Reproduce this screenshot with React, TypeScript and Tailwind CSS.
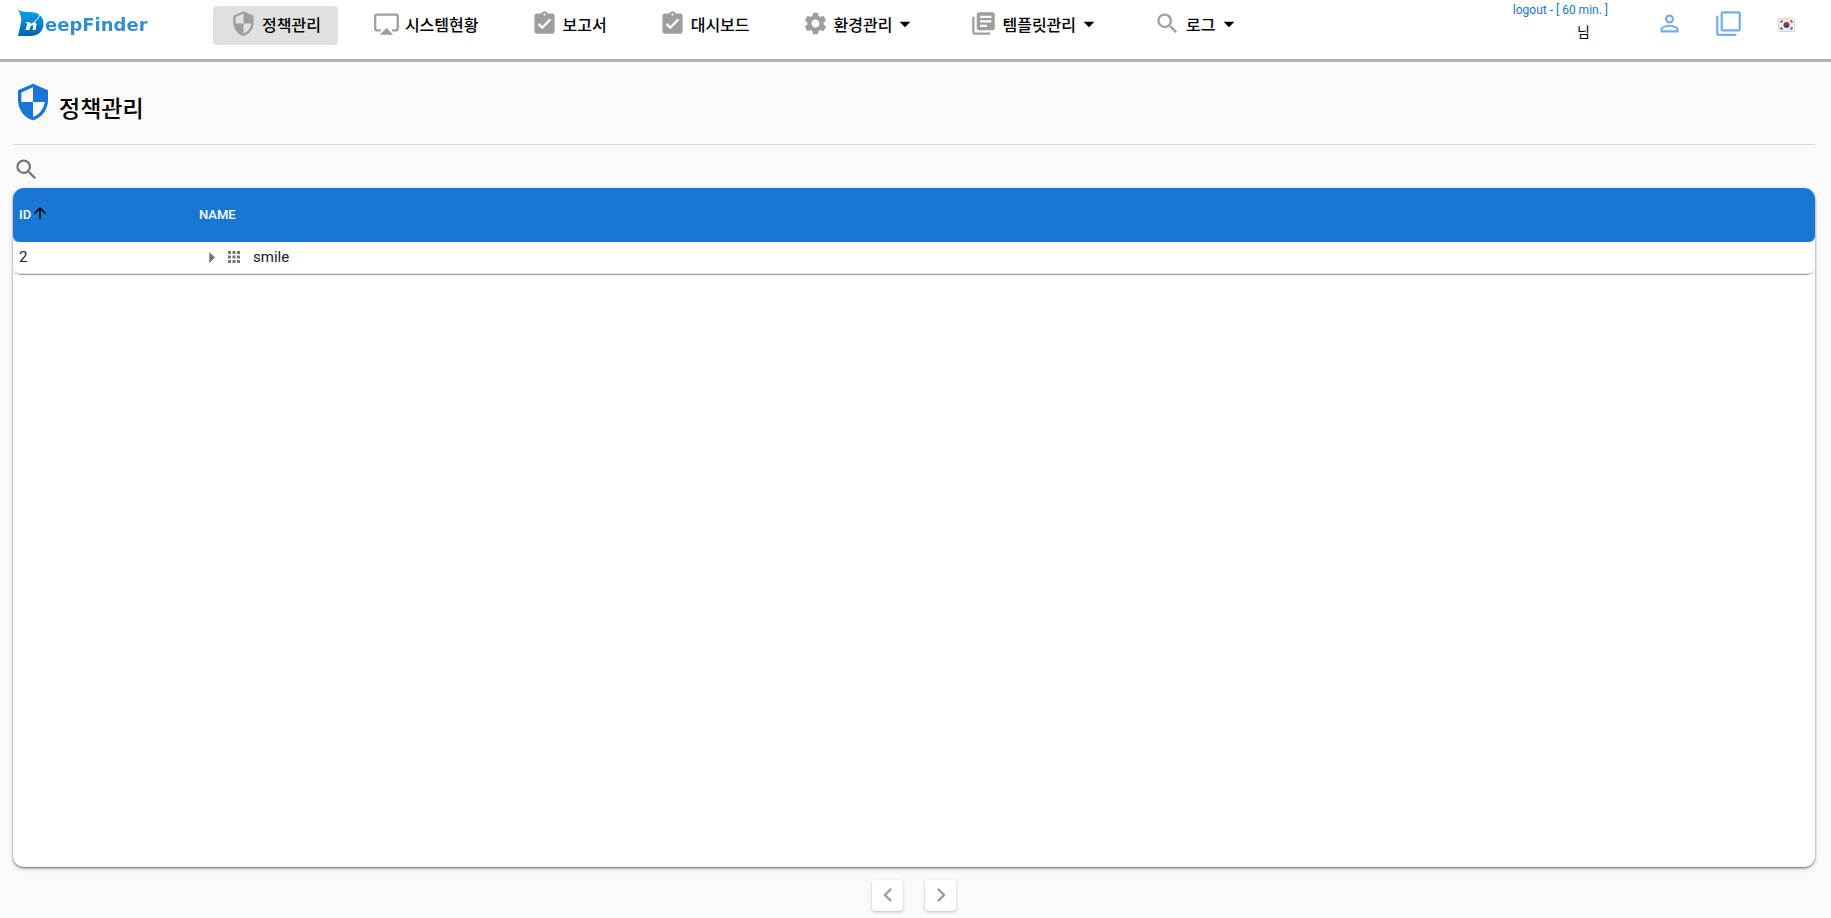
import { useState } from 'react';
import type { IconType } from 'react-icons';
import {
  MdAirplay,
  MdApps,
  MdArrowDropDown,
  MdArrowRight,
  MdArrowUpward,
  MdAssignmentTurnedIn,
  MdChevronLeft,
  MdChevronRight,
  MdFilterNone,
  MdLibraryBooks,
  MdPersonOutline,
  MdSearch,
  MdSecurity,
  MdSettings,
} from 'react-icons/md';

interface NavItem {
  label: string;
  icon: IconType;
  menu?: boolean;
}

interface Policy {
  id: number;
  name: string;
}

const navItems: NavItem[] = [
  { label: '정책관리', icon: MdSecurity },
  { label: '시스템현황', icon: MdAirplay },
  { label: '보고서', icon: MdAssignmentTurnedIn },
  { label: '대시보드', icon: MdAssignmentTurnedIn },
  { label: '환경관리', icon: MdSettings, menu: true },
  { label: '템플릿관리', icon: MdLibraryBooks, menu: true },
  { label: '로그', icon: MdSearch, menu: true },
];

const policies: Policy[] = [{ id: 2, name: 'smile' }];

function Logo() {
  return (
    <a href="#" aria-label="DeepFinder" className="flex w-[195px] shrink-0 items-center pl-[18px]">
      <svg width="27" height="26" viewBox="0 0 27 26" aria-hidden="true">
        <defs>
          <linearGradient id="logo-d" x1="0" y1="0" x2="0" y2="1">
            <stop offset="0" stopColor="#00a6ec" />
            <stop offset="1" stopColor="#0062b0" />
          </linearGradient>
        </defs>
        <path
          d="M0 0c5 2 9 2 14 2.200C20 2.500 25.500 6 25.500 13.500 25.500 21.500 20 26 12 26H0L3.500 10.500C3 6.500 2 3 0 0z"
          fill="url(#logo-d)"
        />
        <path
          d="M7.500 20l1.800-6.500L7 12c2.500 0 5 0 6 1l-.3 1.500C14.500 11.500 18.500 11.500 18.500 14.500L17.500 20h-3l.8-4.500c-1.500-.5-2.500.5-3 1.500l-1 3z"
          fill="#fff"
        />
        <path d="M16 11.500c3-.8 5-3.500 5.500-7" stroke="#fff" strokeWidth="1" fill="none" />
      </svg>
      <span className="bg-linear-to-b from-[#1c9ad8] to-[#3a86c8] bg-clip-text pt-1 font-['DejaVu_Sans'] text-[18px] leading-6 font-bold text-transparent">
        eepFinder
      </span>
    </a>
  );
}

function KoreanFlag() {
  return (
    <svg width="17" height="14" viewBox="0 0 17 14" aria-hidden="true">
      <rect x="0.500" y="0.500" width="16" height="13" rx="1" fill="#eeeeee" stroke="#d6d6d6" />
      <path d="M5.500 7a3 3 0 0 1 6 0z" fill="#d8232f" />
      <path d="M5.500 7a3 3 0 0 0 6 0z" fill="#1d4fa3" />
      <path
        d="M2.500 4.500l2-2M12.500 2.500l2 2M2.500 9.500l2 2M12.500 11.500l2-2"
        stroke="#555"
        strokeWidth="1.600"
      />
    </svg>
  );
}

function Header() {
  const [active, setActive] = useState('정책관리');

  return (
    <header className="flex h-[62px] items-start border-b-[3px] border-[#b3b3b3] bg-white">
      <div className="flex h-[46px] items-center">
        <Logo />
      </div>
      <nav className="flex gap-[18px] pt-[6px] pl-[18px]">
        {navItems.map(({ label, icon: Icon, menu }) => (
          <button
            key={label}
            type="button"
            onClick={() => setActive(label)}
            className={`flex h-[39px] items-center rounded-sm px-[17px] text-[16px] leading-6 font-medium whitespace-nowrap ${
              label === active ? 'bg-[#e0e0e0]' : ''
            }`}
          >
            <Icon className="mr-[5px] mb-1 size-[27px] text-[#9e9e9e]" />
            {label}
            {menu && <MdArrowDropDown className="mb-1 size-[26px]" />}
          </button>
        ))}
      </nav>
      <div className="ml-auto flex h-[46px] items-center pr-9">
        <div className="mr-12 flex h-[46px] flex-col items-end text-[12px] leading-5">
          <button type="button" className="text-[#1976d2]">
            logout - [ 60 min. ]
          </button>
          <span className="pt-[2px] pr-[18px] text-[14px]">님</span>
        </div>
        <button type="button" aria-label="사용자" className="mr-8 text-[#75ade4]">
          <MdPersonOutline className="size-[27px]" />
        </button>
        <button type="button" aria-label="새 창" className="mr-9 text-[#75ade4]">
          <MdFilterNone className="size-[27px]" />
        </button>
        <button type="button" aria-label="한국어" className="pt-1">
          <KoreanFlag />
        </button>
      </div>
    </header>
  );
}

function PolicyTable() {
  return (
    <section className="flex-1 rounded-[11px] bg-white shadow-[0_1px_2px_#00000080,0_2px_5px_#00000026]">
      <table className="w-full table-fixed border-separate border-spacing-0 text-left">
        <thead>
          <tr className="h-[54px] text-[13px] text-white">
            <th className="w-[180px] rounded-tl-[11px] rounded-bl-md bg-[#1976d2] pl-[6px] font-medium">
              <button type="button" className="flex items-center">
                ID
                <MdArrowUpward className="mb-1 size-[18px] text-black" />
              </button>
            </th>
            <th className="rounded-tr-[11px] rounded-br-md bg-[#1976d2] pl-[6px] font-medium">NAME</th>
          </tr>
        </thead>
        <tbody>
          {policies.map((policy) => (
            <tr key={policy.id} className="h-8 rounded-lg text-[15px] text-[#212121] shadow-[0_2px_1px_-1px_#00000066]">
              <td className="border-b border-[#e0e0e0] pl-[6px]">{policy.id}</td>
              <td className="border-b border-[#e0e0e0] pl-[5px]">
                <div className="flex items-center">
                  <button type="button" aria-label="펼치기" className="text-[#757575]">
                    <MdArrowRight className="size-[27px]" />
                  </button>
                  <MdApps className="mr-[10px] mb-[2px] size-[18px] text-[#757575]" />
                  {policy.name}
                </div>
              </td>
            </tr>
          ))}
        </tbody>
      </table>
    </section>
  );
}

function Pagination() {
  const buttonClass =
    'flex size-[31px] items-center justify-center rounded bg-white pb-[2px] text-[#9e9e9e] shadow-[0_1px_3px_#00000040]';

  return (
    <div className="flex justify-center gap-[22px] pt-[13px] pb-[7px]">
      <button type="button" aria-label="이전" className={buttonClass}>
        <MdChevronLeft className="size-7" />
      </button>
      <button type="button" aria-label="다음" className={buttonClass}>
        <MdChevronRight className="size-7" />
      </button>
    </div>
  );
}

export default function App() {
  return (
    <div className="flex min-h-screen flex-col bg-[#fafafa] font-[Roboto,'Noto_Sans_CJK_KR',sans-serif] text-black">
      <Header />
      <main className="flex flex-1 flex-col pr-4 pl-[13px]">
        <div className="flex h-[83px] items-start border-b border-[#dadada] pt-5">
          <MdSecurity className="size-10 text-[#1976d2]" />
          <h1 className="pt-3 pl-[6px] text-[23px] leading-8 font-medium">정책관리</h1>
        </div>
        <button type="button" aria-label="검색" className="mt-[11px] mb-[5px] self-start text-[#757575]">
          <MdSearch className="size-[27px]" />
        </button>
        <PolicyTable />
        <Pagination />
      </main>
    </div>
  );
}
